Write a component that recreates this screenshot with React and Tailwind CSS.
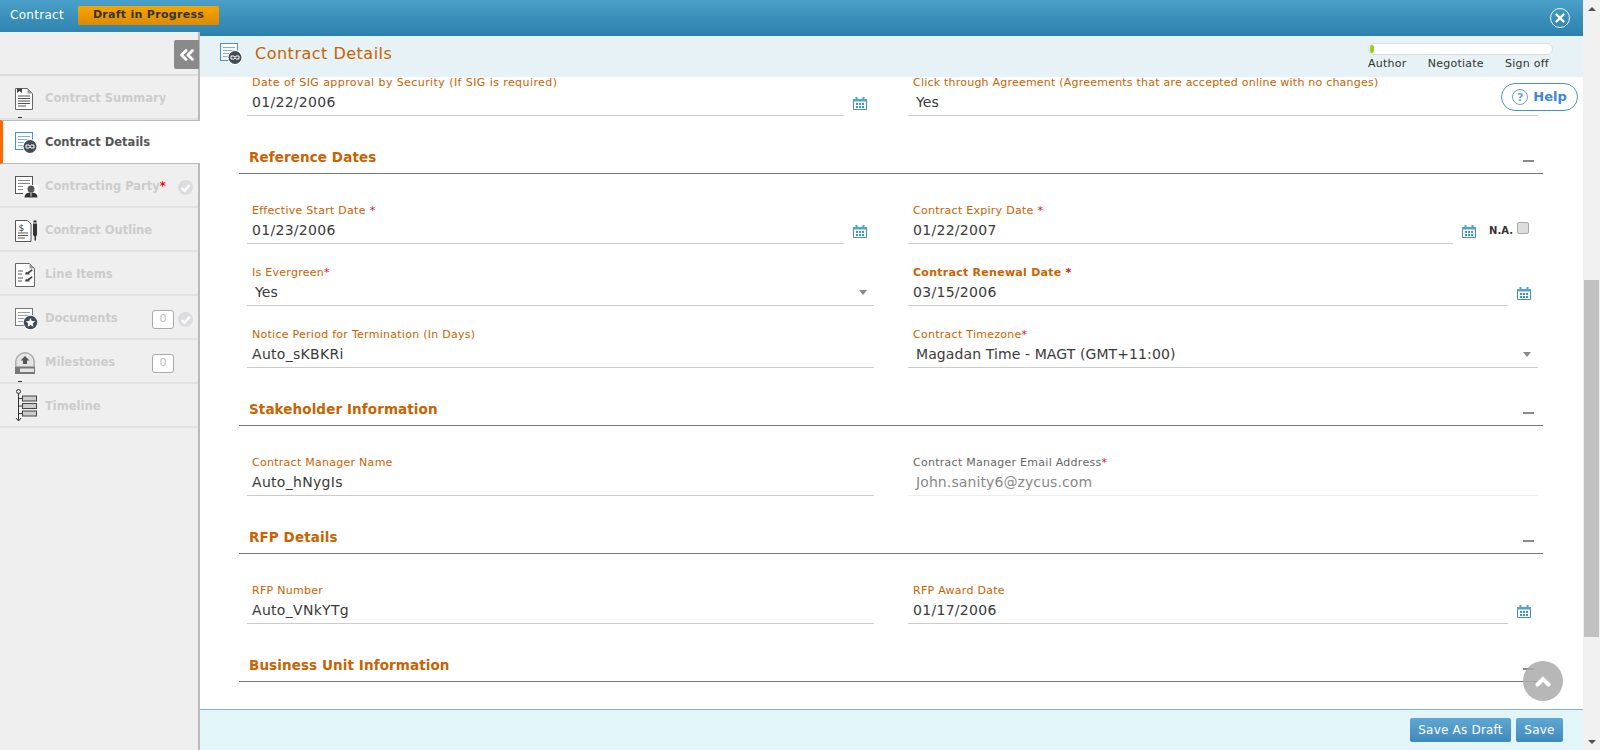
import { ChevronsLeft, X } from 'lucide-react';

const font = { fontFamily: '"DejaVu Sans", Verdana, sans-serif' };

const CalendarIcon = () => (
  <svg width="14" height="13" viewBox="0 0 14 13" className="shrink-0">
    <path d="M0.5 3.5h13v9h-13z" fill="#fff" stroke="#3f8fc9" />
    <rect x="0" y="2" width="14" height="2.5" fill="#4fa3dc" />
    <rect x="2.5" y="0" width="2" height="3" fill="#4fa3dc" />
    <rect x="9.5" y="0" width="2" height="3" fill="#4fa3dc" />
    <path d="M3 6h2v2H3zM6 6h2v2H6zM9 6h2v2H9zM3 9h2v2H3zM6 9h2v2H6zM9 9h2v2H9z" fill="#3f8fc9" />
  </svg>
);

const Caret = () => <span className="mr-[7px] w-0 h-0 border-x-[4px] border-x-transparent border-t-[5px] border-t-[#888]" />;

const Req = () => <span className="text-[#f00]">*</span>;

const Field = ({ label, value, req, bold, calendar, select, grey, inset, right, track = 'tracking-[0.27px]' }) => (
  <div className="h-[62px] flex items-end">
    <div className="flex-1 min-w-0 flex flex-col">
      <div className={`h-[8px] leading-[8px] mb-[3px] text-[11px] pl-[5px] ${track} ${grey ? 'text-[#666]' : 'text-[#c96300]'} ${bold ? 'font-bold' : ''}`}>
        {label}
        {req === 'gap' && <span className="text-[#f00] ml-[4px]">*</span>}
        {req === 'tight' && <Req />}
      </div>
      <div className={`h-[26px] flex items-center justify-between border-b ${grey ? 'border-[#eee]' : 'border-[#ccc]'}`}>
        <span className={`text-[14px] ${inset ? 'tracking-[0.1px] pl-[8px]' : 'tracking-[0.3px] pl-[5px]'} ${grey ? 'text-[#888]' : 'text-[#3a3a3a]'}`}>{value}</span>
        {select && <Caret />}
      </div>
    </div>
    {calendar && (
      <div className="w-[30px] h-[26px] flex items-center justify-end pr-[7px] shrink-0">
        <CalendarIcon />
      </div>
    )}
    {right}
  </div>
);

const Section = ({ title }) => (
  <div className="h-[58px] ml-[-8px] mr-[-5px] mb-[8px] flex items-end justify-between border-b border-[#777]">
    <div className="pl-[10px] mb-[7px] text-[13.5px] font-bold text-[#c96300] tracking-[0.1px] leading-[18px]">{title}</div>
    <div className="mb-[11px] mr-[9px] w-[11px] h-[2px] bg-[#888]" />
  </div>
);

const DocIcon = ({ badge, outline = '#4a90d9' }) => (
  <svg width="23" height="22" viewBox="0 0 23 22">
    <rect x="0.5" y="0.5" width="17" height="17" fill="#fff" stroke={outline} />
    <path d="M3 4.5h12M3 7.5h12M3 10.5h9M3 13.5h7" stroke={outline} strokeOpacity="0.7" />
    {badge === 'infinity' && (
      <g>
        <circle cx="15" cy="14.5" r="7.5" fill="#fff" />
        <circle cx="15" cy="14.5" r="6.5" fill="#444d57" />
        <path d="M11 13h3l1 1.5 1-1.5h3v3h-3l-1-1-1 1h-3z" fill="none" stroke="#fff" />
      </g>
    )}
    {badge === 'person' && (
      <g>
        <rect x="8" y="9" width="15" height="13" fill="#fff" />
        <circle cx="16" cy="13" r="3.5" fill="#555" />
        <path d="M9.5 21.5c0-4 3-5 6.5-5s6.5 1 6.5 5z" fill="#333" />
        <path d="M16 16.5v4" stroke="#ddd" />
      </g>
    )}
    {badge === 'star' && (
      <g>
        <circle cx="15.5" cy="14.5" r="7.5" fill="#fff" />
        <circle cx="15.5" cy="14.5" r="6.8" fill="#444d57" />
        <path d="M15.5 10l1.4 3 3.2.3-2.4 2.2.7 3.2-2.9-1.7-2.9 1.7.7-3.2-2.4-2.2 3.2-.3z" fill="#fff" />
      </g>
    )}
  </svg>
);

const SummaryIcon = () => (
  <svg width="18" height="22" viewBox="0 0 18 22">
    <path d="M0.5 0.5h12l5 5v16H0.5z" fill="#fff" stroke="#666" />
    <path d="M12.5 0.5v5h5z" fill="#999" />
    <path d="M2 0.5h5v4.5l-2.5-2-2.5 2z" fill="#444" />
    <path d="M3 8h12M3 10.5h12M3 13h12M3 15.5h12M3 18h8" stroke="#555" />
  </svg>
);

const OutlineIcon = () => (
  <svg width="23" height="22" viewBox="0 0 23 22">
    <path d="M0.5 0.5h12l3.5 3.5v17.5H0.5z" fill="#fff" stroke="#555" />
    <path d="M3 13h10M3 15.5h10M3 18h7" stroke="#555" />
    <text x="3.5" y="10.5" fontSize="9" fill="#333" fontFamily="DejaVu Sans">$</text>
    <path d="M18 3.5h4v11.5l-1 1.5v4h-1.5v-4l-1.5-1.5z" fill="#333" />
    <rect x="18.5" y="0.5" width="3" height="2" fill="#333" />
  </svg>
);

const LineItemsIcon = () => (
  <svg width="20" height="24" viewBox="0 0 20 24">
    <path d="M0.5 0.5h14l5 5v18H0.5z" fill="#fff" stroke="#666" />
    <path d="M14.5 0.5v5h5z" fill="#999" />
    <path d="M3 8h5M3 11h4M3 15h5M3 18h4" stroke="#555" />
    <path d="M17 6l-5 3.5-1-1-1 3h5l-1-1 3.5-3zM17 13l-5 3.5-1-1-1 3h5l-1-1 3.5-3z" fill="#444" />
  </svg>
);

const MilestoneIcon = () => (
  <svg width="20" height="22" viewBox="0 0 20 22">
    <path d="M0 22V10a10 10 0 0 1 20 0v12z" fill="#aaa" />
    <path d="M1.5 14V10a8.5 8.5 0 0 1 17 0v4z" fill="#e4e4e4" />
    <path d="M10 4l4.5 4.5H12V12H8V8.5H5.5z" fill="#555" />
    <rect x="0" y="15" width="20" height="7" fill="#777" />
    <rect x="5" y="16.5" width="14" height="3.5" fill="#e4e4e4" />
  </svg>
);

const TimelineIcon = () => (
  <svg width="22" height="33" viewBox="0 0 22 33" className="-mt-[4px]">
    <circle cx="3.5" cy="2.5" r="2" fill="none" stroke="#333" />
    <path d="M3.5 4.5v27M1 29l2.5 3 2.5-3M3.5 9.5h4M3.5 17h4M3.5 24.5h4" stroke="#333" fill="none" />
    <rect x="7.5" y="7" width="14" height="5" fill="#ccc" stroke="#444" />
    <rect x="7.5" y="14.5" width="14" height="5" fill="#ccc" stroke="#444" />
    <rect x="7.5" y="22" width="14" height="5" fill="#ccc" stroke="#444" />
  </svg>
);

const Check = () => (
  <svg width="15" height="15" viewBox="0 0 16 16">
    <circle cx="8" cy="8" r="8" fill="#dcdce0" />
    <path d="M4 8.5l3 3 5.5-6.5" fill="none" stroke="#fff" strokeWidth="2.5" />
  </svg>
);

const Count = ({ n }) => (
  <span className="w-[22px] h-[19px] mr-[4px] flex items-center justify-center border border-[#aaa] rounded-[3px] bg-white text-[11px] text-[#bbb]">{n}</span>
);

const navItems = [
  { label: 'Contract Summary', icon: <SummaryIcon />, notch: true },
  { label: 'Contract Details', icon: <DocIcon badge="infinity" />, active: true },
  { label: 'Contracting Party', icon: <DocIcon badge="person" outline="#555" />, req: true, check: true },
  { label: 'Contract Outline', icon: <OutlineIcon /> },
  { label: 'Line Items', icon: <LineItemsIcon /> },
  { label: 'Documents', icon: <DocIcon badge="star" outline="#777" />, count: 0, check: true },
  { label: 'Milestones', icon: <MilestoneIcon />, count: 0, notch: true },
  { label: 'Timeline', icon: <TimelineIcon /> },
];

const Sidebar = () => (
  <aside className="w-[200px] shrink-0 -mt-[4px] relative z-10 bg-[#efefef] border-r-[2px] border-[#bbb] flex flex-col">
    <div className="h-[44px] flex justify-end items-end border-b-[2px] border-[#dcdcdc]">
      <div className="mb-[5px] -mr-[1px] w-[25px] h-[29px] bg-[#8a8a8a] rounded-l-[2px] flex items-center justify-center text-white">
        <ChevronsLeft size={22} strokeWidth={3} />
      </div>
    </div>
    {navItems.map((item) => (
      <div
        key={item.label}
        className={`relative h-[44px] shrink-0 flex items-center ${item.active ? 'bg-white border-l-[3px] border-l-[#ff6a00] pl-[12px] pt-[2px] -mr-[2px] border-y border-y-[#bbb]' : 'pl-[15px] pt-[4px] border-b-[2px] border-b-[#e2e2e2]'}`}
      >
        <span className="w-[30px] flex items-center shrink-0">{item.icon}</span>
        <span className={`text-[11.5px] font-bold ${item.active ? 'text-[#555]' : 'text-[#ccc]'}`}>
          {item.label}
          {item.req && <Req />}
        </span>
        <span className="ml-auto mr-[5px] flex items-center">
          {item.count !== undefined && <Count n={item.count} />}
          {item.check ? <Check /> : item.count !== undefined ? <span className="w-[15px]" /> : null}
        </span>
        {item.notch && <span className="absolute bottom-0 left-[18px] w-[4px] h-[1px] bg-[#333]" />}
      </div>
    ))}
  </aside>
);

const Stepper = () => (
  <div className="w-[185px] mr-[30px]">
    <div className="h-[12px] rounded-full bg-white border border-[#ddd] flex items-center p-px">
      <div className="w-[4px] h-[8px] rounded-full bg-[#9ccc22]" />
    </div>
    <div className="mt-[2px] flex justify-between text-[11px] text-[#333] leading-[14px] tracking-[0.25px] pr-[4px]">
      <span>Author</span>
      <span>Negotiate</span>
      <span>Sign off</span>
    </div>
  </div>
);

const NaBox = () => (
  <div className="w-[55px] h-[26px] shrink-0 flex items-start justify-end pr-[9px]">
    <span className="mt-[7px] text-[10px] leading-[12px] font-bold text-[#333] mr-[4px]">N.A.</span>
    <span className="mt-[4px] w-[12px] h-[12px] rounded-[2px] bg-[#ddd] border border-[#aaa]" />
  </div>
);

const Row = ({ children }) => <div className="grid grid-cols-[627px_630px] gap-x-[34px]">{children}</div>;

export default function App() {
  return (
    <div className="h-[750px] overflow-hidden flex bg-white" style={font}>
      <div className="flex-1 min-w-0 flex flex-col">
        <header className="h-[36px] shrink-0 flex items-center justify-between pl-[10px] pr-[13px] bg-gradient-to-b from-[#4aa0c8] to-[#2b80ae]">
          <div className="flex items-center gap-[14px] -mt-[6px]">
            <span className="text-[12px] text-white tracking-[0.3px]">Contract</span>
            <span className="w-[141px] h-[19px] flex items-center justify-center rounded-[2px] bg-gradient-to-b from-[#f6a600] to-[#dd8a00] text-[11px] font-bold text-[#333] tracking-[0.3px]">Draft in Progress</span>
          </div>
          <span className="w-[20px] h-[20px] -mt-[1px] rounded-full border-[1.5px] border-white/90 flex items-center justify-center text-white">
            <X size={14} strokeWidth={4} />
          </span>
        </header>
        <div className="flex-1 min-h-0 flex">
          <Sidebar />
          <main className="flex-1 min-w-0 relative flex flex-col">
            <div className="h-[41px] shrink-0 relative z-10 bg-[#e6f2f5] flex items-center justify-between pl-[20px]">
              <div className="flex items-center gap-[12px] -mt-[5px]">
                <DocIcon badge="infinity" />
                <h1 className="text-[16px] text-[#c96300] tracking-[0.5px]">Contract Details</h1>
              </div>
              <Stepper />
            </div>
            <div className="flex-1 min-h-0 overflow-hidden pl-[47px]">
              <div className="w-[1291px] -mt-[23px]">
                <Row>
                  <Field label="Date of SIG approval by Security (If SIG is required)" value="01/22/2006" calendar track="tracking-[0.42px]" />
                  <Field label="Click through Agreement (Agreements that are accepted online with no changes)" value="Yes" inset track="tracking-[0.22px]" />
                </Row>
                <Section title="Reference Dates" />
                <Row>
                  <Field label="Effective Start Date" req="gap" value="01/23/2006" calendar />
                  <Field label="Contract Expiry Date" req="gap" value="01/22/2007" calendar right={<NaBox />} />
                  <Field label="Is Evergreen" req="tight" value="Yes" select inset />
                  <Field label="Contract Renewal Date" req="gap" bold value="03/15/2006" calendar />
                  <Field label="Notice Period for Termination (In Days)" value="Auto_sKBKRi" />
                  <Field label="Contract Timezone" req="tight" value="Magadan Time - MAGT (GMT+11:00)" select inset />
                </Row>
                <Section title="Stakeholder Information" />
                <Row>
                  <Field label="Contract Manager Name" value="Auto_hNygIs" />
                  <Field label="Contract Manager Email Address" req="tight" value="John.sanity6@zycus.com" grey inset />
                </Row>
                <Section title="RFP Details" />
                <Row>
                  <Field label="RFP Number" value="Auto_VNkYTg" />
                  <Field label="RFP Award Date" value="01/17/2006" calendar />
                </Row>
                <Section title="Business Unit Information" />
              </div>
            </div>
            <footer className="h-[41px] shrink-0 relative z-10 bg-[#e2f5f9] border-t border-[#7fb5dd] flex items-center justify-end gap-[5px] pr-[20px]">
              <button className="w-[101px] h-[24px] rounded-[2px] bg-gradient-to-b from-[#5fa8d3] to-[#4089bd] text-[12px] text-white tracking-[0.2px]">Save As Draft</button>
              <button className="w-[47px] h-[24px] rounded-[2px] bg-gradient-to-b from-[#5fa8d3] to-[#4089bd] text-[12px] text-white tracking-[0.2px]">Save</button>
            </footer>
            <button className="absolute z-20 left-[1301px] top-[47px] w-[77px] h-[28px] rounded-full bg-white border border-[#4a90d9] flex items-center justify-center gap-[5px] text-[13px] font-bold text-[#3f85d8]">
              <span className="w-[16px] h-[16px] rounded-full border-[1.5px] border-[#6aa3e0] flex items-center justify-center text-[11px] leading-none text-[#6aa3e0]">?</span>
              Help
            </button>
            <span className="absolute z-20 left-[1323px] top-[625px] w-[40px] h-[40px] rounded-full bg-[#aaa]/85 flex items-center justify-center">
              <svg width="16" height="12" viewBox="0 0 16 12">
                <path d="M2.5 9.5L8 4l5.5 5.5" fill="none" stroke="#fff" strokeWidth="4" strokeLinecap="round" />
              </svg>
            </span>
          </main>
        </div>
      </div>
      <div className="w-[17px] shrink-0 bg-[#f1f1f1] flex flex-col items-center">
        <div className="h-[17px] flex items-center"><span className="w-0 h-0 border-x-[4px] border-x-transparent border-b-[4px] border-b-[#505050]" /></div>
        <div className="flex-1 w-full flex flex-col pt-[263px] px-px">
          <div className="h-[357px] bg-[#c1c1c1]" />
        </div>
        <div className="h-[17px] flex items-center"><span className="w-0 h-0 border-x-[4px] border-x-transparent border-t-[4px] border-t-[#505050]" /></div>
      </div>
    </div>
  );
}
